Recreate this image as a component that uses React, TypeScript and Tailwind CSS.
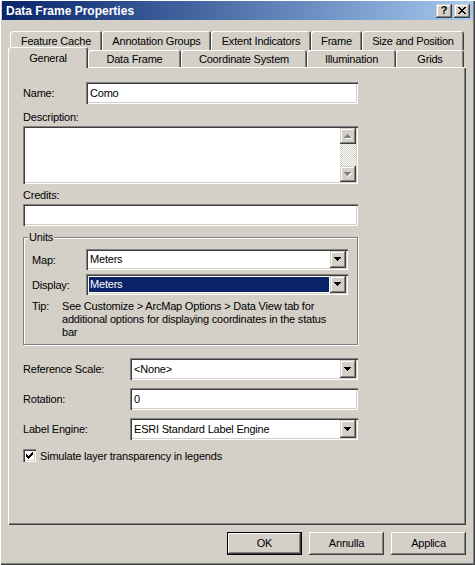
import type { ReactNode } from 'react'

// Win2000 classic palette: face #d4d0c8, shadow #808080, dark #404040, light #fff
const sunken =
  'shadow-[inset_1px_1px_0_#808080,inset_2px_2px_0_#404040,inset_-1px_-1px_0_#ffffff,inset_-2px_-2px_0_#d4d0c8]'
const raised = 'shadow-[inset_-1px_-1px_0_#404040,inset_1px_1px_0_#ffffff,inset_-2px_-2px_0_#808080]'
const raisedSoft =
  'shadow-[inset_-1px_-1px_0_#404040,inset_1px_1px_0_#d4d0c8,inset_-2px_-2px_0_#808080,inset_2px_2px_0_#ffffff]'

function Arrow({ up = false, disabled = false }: { up?: boolean; disabled?: boolean }) {
  const rows = [7, 5, 3, 1]
  const order = up ? [...rows].reverse() : rows
  return (
    <svg width="8" height="5" viewBox="0 0 8 5" shapeRendering="crispEdges">
      {disabled &&
        order.map((w, i) => (
          <rect key={`s${i}`} x={(7 - w) / 2 + 1} y={i + 1} width={w} height={1} fill="#ffffff" />
        ))}
      {order.map((w, i) => (
        <rect key={i} x={(7 - w) / 2} y={i} width={w} height={1} fill={disabled ? '#808080' : '#000000'} />
      ))}
    </svg>
  )
}

function DropButton() {
  return (
    <div className={`w-[16px] h-full flex items-center justify-center bg-[#d4d0c8] ${raisedSoft}`}>
      <Arrow />
    </div>
  )
}

function Combo({ value, className, highlight = false }: { value: string; className: string; highlight?: boolean }) {
  return (
    <div className={`flex bg-white p-[2px] ${sunken} ${className}`}>
      <div className="flex-1 flex p-[1px] min-w-0">
        <div
          className={`flex-1 flex items-center pl-[1px] ${highlight ? 'bg-[#0a246a] text-white' : 'text-black'}`}
        >
          {value}
        </div>
      </div>
      <DropButton />
    </div>
  )
}

function TextBox({ value = '', className }: { value?: string; className: string }) {
  return (
    <div className={`flex items-center bg-white pl-[4px] ${sunken} ${className}`}>{value}</div>
  )
}

function Tab({ label, w, selected = false }: { label: string; w: string; selected?: boolean }) {
  const base =
    'flex justify-center bg-[#d4d0c8] rounded-t-[3px] shadow-[inset_1px_1px_0_#ffffff,inset_-1px_0_0_#404040,inset_-2px_0_0_#808080]'
  if (selected) {
    return (
      <div className={`${base} ${w} relative z-10 h-[21px] -mb-[1px] items-start pt-[3px]`}>{label}</div>
    )
  }
  return <div className={`${base} ${w} h-full items-center pt-[1px]`}>{label}</div>
}

function Label({ children, className = '' }: { children: ReactNode; className?: string }) {
  return <div className={`leading-[14px] ${className}`}>{children}</div>
}

function CheckMark() {
  const rows: number[][] = [[6], [5, 6], [0, 4, 5, 6], [0, 1, 3, 4, 5], [0, 1, 2, 3, 4], [1, 2, 3], [2]]
  return (
    <svg width="7" height="7" viewBox="0 0 7 7" shapeRendering="crispEdges">
      {rows.map((xs, y) => xs.map((x) => <rect key={`${x}-${y}`} x={x} y={y} width={1} height={1} fill="#000" />))}
    </svg>
  )
}

function CloseGlyph() {
  const rows: number[][] = [
    [0, 1, 6, 7],
    [1, 2, 5, 6],
    [2, 3, 4, 5],
    [3, 4],
    [2, 3, 4, 5],
    [1, 2, 5, 6],
    [0, 1, 6, 7],
  ]
  return (
    <svg width="8" height="7" viewBox="0 0 8 7" shapeRendering="crispEdges">
      {rows.map((xs, y) => xs.map((x) => <rect key={`${x}-${y}`} x={x} y={y} width={1} height={1} fill="#000" />))}
    </svg>
  )
}

export default function App() {
  return (
    <div
      className={`w-[475px] h-[565px] flex flex-col bg-[#d4d0c8] text-black text-[11px] tracking-[-0.2px] font-['Liberation_Sans',Arial,sans-serif] shadow-[inset_1px_1px_0_#ffffff,inset_-1px_-1px_0_#404040,inset_-2px_-2px_0_#808080] select-none`}
    >
      {/* Title bar */}
      <div className="mx-[2px] mt-[1px] h-[19px] flex items-center bg-linear-to-r from-[#0a246a] to-[#a6caf0] pl-[4px] pr-[3px]">
        <span className="flex-1 text-white font-bold text-[12px] tracking-normal">Data Frame Properties</span>
        <div className="flex gap-[2px]">
          <div className={`w-[16px] h-[14px] flex items-center justify-center bg-[#d4d0c8] ${raisedSoft} font-bold text-[11px] leading-none tracking-normal`}>
            ?
          </div>
          <div className={`w-[16px] h-[14px] flex items-center justify-center bg-[#d4d0c8] ${raisedSoft}`}>
            <CloseGlyph />
          </div>
        </div>
      </div>

      {/* Tabs */}
      <div className="pl-[8px] mt-[11px] flex flex-col">
        <div className="h-[19px] flex pl-[2px]">
          <Tab label="Feature Cache" w="w-[92px]" />
          <Tab label="Annotation Groups" w="w-[109px]" />
          <Tab label="Extent Indicators" w="w-[100px]" />
          <Tab label="Frame" w="w-[51px]" />
          <Tab label="Size and Position" w="w-[102px]" />
        </div>
        <div className="h-[17px] flex items-end">
          <Tab label="General" w="w-[80px]" selected />
          <Tab label="Data Frame" w="w-[93px]" />
          <Tab label="Coordinate System" w="w-[126px]" />
          <Tab label="Illumination" w="w-[89px]" />
          <Tab label="Grids" w="w-[68px]" />
        </div>

        {/* Panel */}
        <div className="w-[458px] h-[458px] flex flex-col pt-[15px] pl-[15px] shadow-[inset_1px_1px_0_#ffffff,inset_-1px_-1px_0_#404040,inset_-2px_-2px_0_#808080]">
          <div className="flex items-center h-[22px]">
            <Label className="w-[63px]">Name:</Label>
            <TextBox value="Como" className="w-[272px] h-[22px]" />
          </div>

          <Label className="mt-[6px]">Description:</Label>
          <div className={`mt-[2px] w-[335px] h-[58px] flex justify-end bg-white p-[2px] ${sunken}`}>
            <div className="w-[16px] h-full flex flex-col">
              <div className={`h-[16px] flex items-center justify-center bg-[#d4d0c8] ${raisedSoft}`}>
                <Arrow up disabled />
              </div>
              <div className="flex-1 bg-[image:repeating-conic-gradient(#ffffff_0_25%,#d4d0c8_0_50%)] bg-[length:2px_2px]" />
              <div className={`h-[16px] flex items-center justify-center bg-[#d4d0c8] ${raisedSoft}`}>
                <Arrow disabled />
              </div>
            </div>
          </div>

          <Label className="mt-[4px]">Credits:</Label>
          <TextBox className="mt-[2px] w-[335px] h-[22px]" />

          {/* Units group */}
          <div className="relative mt-[11px] w-[335px] h-[108px] border border-[#808080] shadow-[inset_1px_1px_0_#ffffff,1px_1px_0_#ffffff] pl-[8px] pt-[11px]">
            <span className="absolute -top-[8px] left-[4px] px-[1px] bg-[#d4d0c8] leading-[14px]">Units</span>
            <div className="flex items-center">
              <Label className="w-[54px]">Map:</Label>
              <Combo value="Meters" className="w-[262px] h-[21px]" />
            </div>
            <div className="flex items-center mt-[4px]">
              <Label className="w-[54px]">Display:</Label>
              <Combo value="Meters" className="w-[262px] h-[21px]" highlight />
            </div>
            <div className="flex mt-[5px] leading-[13px]">
              <div className="w-[30px]">Tip:</div>
              <div className="whitespace-nowrap">
                See Customize &gt; ArcMap Options &gt; Data View tab for
                <br />
                additional options for displaying coordinates in the status
                <br />
                bar
              </div>
            </div>
          </div>

          <div className="flex items-center mt-[13px]">
            <Label className="w-[107px]">Reference Scale:</Label>
            <Combo value="<None>" className="w-[228px] h-[22px]" />
          </div>
          <div className="flex items-center mt-[8px]">
            <Label className="w-[107px]">Rotation:</Label>
            <TextBox value="0" className="w-[228px] h-[22px]" />
          </div>
          <div className="flex items-center mt-[8px]">
            <Label className="w-[107px]">Label Engine:</Label>
            <Combo value="ESRI Standard Label Engine" className="w-[228px] h-[22px]" />
          </div>
          <div className="flex items-center mt-[9px] h-[13px]">
            <div className={`w-[13px] h-[13px] flex items-center justify-center bg-white ${sunken}`}>
              <CheckMark />
            </div>
            <span className="ml-[4px] leading-[14px]">Simulate layer transparency in legends</span>
          </div>
        </div>
      </div>

      {/* Dialog buttons */}
      <div className="flex justify-end gap-[7px] pr-[9px] mt-[7px]">
        <div className="w-[75px] h-[23px] flex items-center justify-center bg-[#d4d0c8] shadow-[inset_0_0_0_1px_#000000,inset_-2px_-2px_0_#404040,inset_2px_2px_0_#ffffff,inset_-3px_-3px_0_#808080]">
          OK
        </div>
        <div className={`w-[75px] h-[23px] flex items-center justify-center bg-[#d4d0c8] ${raised}`}>Annulla</div>
        <div className={`w-[75px] h-[23px] flex items-center justify-center bg-[#d4d0c8] ${raised}`}>Applica</div>
      </div>
    </div>
  )
}
